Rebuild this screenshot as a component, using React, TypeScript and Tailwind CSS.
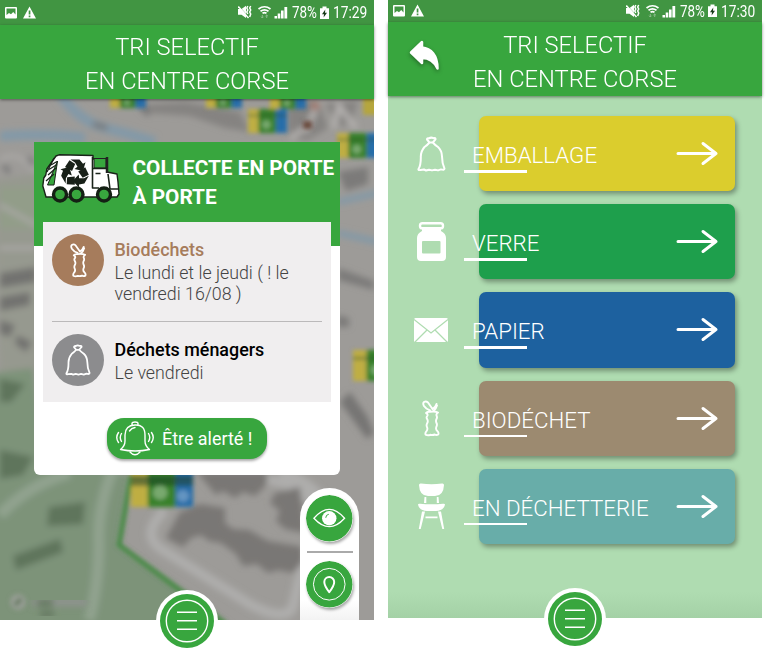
import React from "react";

const GREEN = "#38a63e";

type IconProps = { className?: string };

function StatusBar({ time, className }: { time: string; className: string }) {
  return (
    <div className={`flex shrink-0 items-center bg-[#419542] text-white ${className}`}>
      <svg className="h-[14px] w-[31px] shrink-0" viewBox="0 0 31 14" fill="#fff">
        <path fillRule="evenodd" d="M1 1h10a1 1 0 0 1 1 1v9.500a1 1 0 0 1-1 1H1a1 1 0 0 1-1-1V2a1 1 0 0 1 1-1zM1.500 2.500v6.500l2.500-2 2 1.300L8.200 6l2.300 2.500v-6z" />
        <path fillRule="evenodd" d="M24.500 .5 31 12.500H18zM23.700 4.500v4h1.700v-4zM23.700 9.600v1.600h1.700V9.600z" />
      </svg>
      <svg className="ml-auto h-[15px] w-[50px] shrink-0" viewBox="0 0 50 15" fill="#fff">
        <path d="M0 4h3.500L8 .8V13L3.500 9.700H0z" />
        <path d="M.5 .8 11 12.200" stroke="#419542" strokeWidth=".6" />
        <path d="M.3 1.500 10.500 13" stroke="#fff" strokeWidth="1.500" />
        <path d="M9.800 1l-1 2 1 2-1 2 1 2M12.700 1l-1 2 1 2-1 2 1 2-1 3" stroke="#fff" strokeWidth="1.500" fill="none" />
        <path d="M20.500 4q6-4.500 12 0M22.500 6.200q4-2.800 8 0M24.500 8.200q2-1.300 4 0" stroke="#fff" strokeWidth="1.700" fill="none" />
        <path d="M24.300 10v3m-1.300-1.300 1.300 1.300 1.200-1.300M28.700 13v-3m-1.300 1.200L28.700 10l1.200 1.200" stroke="#91c192" strokeWidth=".9" fill="none" />
        <path d="M36.500 11h2.500v2.500h-2.500zM39.700 8.500h2.600v5h-2.600zM43 5.500h2.600v8h-2.600zM46.400 2h2.800v11.500h-2.800z" />
      </svg>
      <span className="ml-[4px] mt-px w-[28px] shrink-0 origin-left scale-x-[0.84] whitespace-nowrap text-[16px] leading-none">78%</span>
      <svg className="h-[14px] w-[9px] shrink-0" viewBox="0 0 9 14">
        <path d="M2.500 .5h4v1.800H9V13H0V2.300h2.500z" fill="#fff" />
        <path d="M5.300 3.500 2 8.300h2L3.600 11.500 7 6.800H5z" fill="#173b18" />
      </svg>
      <span className="ml-[4px] mt-px w-[36px] shrink-0 origin-left scale-x-[0.86] whitespace-nowrap text-[16px] leading-none">{time}</span>
    </div>
  );
}

function Header({ back = false }: { back?: boolean }) {
  return (
    <header className={`relative z-10 flex h-[74px] shrink-0 items-start justify-center bg-[#38a63e] shadow-[0_1px_3px_rgba(0,0,0,0.45)] ${back ? "pt-[6px]" : "pt-[5px]"}`}>
      {back && (
        <svg className="absolute left-[21px] top-[17px] h-[32px] w-[31px] drop-shadow-[0_2px_2px_rgba(0,0,0,0.35)]" viewBox="0 0 31 32" fill="#fff" stroke="#fff" strokeWidth="2.500" strokeLinejoin="round">
          <path d="M2 13.500 13 3v5.500C22 9.500 28.500 16 28.500 29.500 25 22 20 19 13 19v5z" />
        </svg>
      )}
      <h1 className="whitespace-nowrap text-center text-[23.700px] font-light leading-[34px] text-white">
        TRI SELECTIF
        <br />
        EN CENTRE CORSE
      </h1>
    </header>
  );
}

function Bins({ x, y, w, h }: { x: number; y: number; w: number; h: number }) {
  return (
    <g>
      <rect x={x} y={y} width={w * 0.27} height={h} fill="#bfae42" />
      <rect x={x + w * 0.27} y={y} width={w * 0.45} height={h} fill="#38812a" />
      <rect x={x + w * 0.72} y={y} width={w * 0.28} height={h} fill="#286da9" />
      <rect x={x} y={y + h * 0.22} width={w} height={h * 0.1} fill="#234630" opacity=".4" />
      <circle cx={x + w * 0.47} cy={y + h * 0.65} r={h * 0.18} fill="#8eb785" opacity=".75" />
    </g>
  );
}

function MapBackdrop() {
  return (
    <svg className="absolute inset-0 h-full w-full" viewBox="0 99 374 521" preserveAspectRatio="none">
      <defs>
        <filter id="soft" x="-10%" y="-10%" width="120%" height="120%">
          <feGaussianBlur stdDeviation="3.2" />
        </filter>
        <filter id="slight" x="-10%" y="-10%" width="120%" height="120%">
          <feGaussianBlur stdDeviation="2" />
        </filter>
      </defs>
      <rect y="99" width="374" height="521" fill="#9d9b98" />
      <g filter="url(#soft)">
        <path d="M-5 180 60 170 110 350 0 380z" fill="#96998f" />
        <path d="M0 187h35v42H0z" fill="#929d89" />
        <path d="M60 94q20 28 45 34t50 14M0 136q50-3 85 2" stroke="#8299a8" strokeWidth="10" fill="none" />
        <path d="M338 202l40-9M338 233l40 9" stroke="#8299a8" strokeWidth="6" fill="none" />
        <path d="M0 160q18-12 34 12M0 205l36 20M0 248h36" stroke="#aaa8a6" strokeWidth="4" fill="none" />
        <path d="M-15 374 33 368 45 460 129 475 118 545 250 640H-15z" fill="#7d9379" />
        <path d="M0 515q28-30 70-42M115 465q-18 40-16 80-1 45-10 75" stroke="#91a38f" strokeWidth="11" fill="none" />
        <path d="M49 507l36-5-2 22-36 2zM13 556l47-17 3 13-47 18zM0 379l25 5-14 18H0zM0 450l33 7-10 18-23 4z" fill="#5f745c" />
        <path d="M0 273l36-6v15l-36 6zM0 297l30-5v13l-30 6zM0 320l15 5-5 12-10-3zM17 335l15 7-6 10-11-8z" fill="#727270" />
        <path d="M165 510q-28 27 1 42l85 53q40 20 43-3l13-55M280 472q20 4 40 24M240 478q70 0 74 36" stroke="#aeadac" strokeWidth="10" fill="none" />
        <path d="M197 472h70v12l-12 12-12-4-8 6-12-7-7 4zM275 493l25-6 5 46-20-4-9-8 4-10-10-8zM180 512l20-8 25 4v15l8 6 16 1 19 11 35 6v15l-10 11-15-3-10 3-11-9-14 2-7-12-15-11-12-2-8-6-10 3-8 9-17-9z" fill="#797775" />
        <path d="M340 402l10-10 17 24 7 17-7 6z" fill="#767573" />
        <path d="M338 268l36 13v9l-36-10zM338 172l30-5v17l-22 7zM337 315l12 3v9h-12z" fill="#7c7a79" />
        <path d="M140 105l45-3 55 10 10 20-25-4-35-12-40-3zM288 105l30-5 10 28-20 12-20-3zM325 104l33-3-6 20-12 6z" fill="#858381" />
        <path d="M318 102l-12 30M334 128l5-22 17 22M290 138l20-13" stroke="#b5b2b0" strokeWidth="5" fill="none" />
        <circle cx="315" cy="106" r="4" fill="#a57568" />
        <path d="M140 106l9 9M93 124l14 4M4 165l5 8M29 157l4 8M337 500l7 10" stroke="#777" strokeWidth="5" />
      </g>
      <g filter="url(#slight)">
        <path d="M131 475 119 545 225 624" stroke="#468a45" strokeWidth="5" fill="none" />
        <rect x="303" y="121" width="9" height="8" fill="#6b4c40" />
        <Bins x={110} y={91} w={36} h={17} />
        <Bins x={206} y={91} w={36} h={17} />
        <Bins x={270} y={91} w={36} h={18} />
        <Bins x={248} y={109} w={39} h={24} />
        <Bins x={337} y={133} w={42} h={25} />
        <rect x="363" y="90" width="16" height="25" fill="#b5a63c" />
        <Bins x={353} y={350} w={50} h={31} />
        <Bins x={131} y={466} w={62} h={41} />
        <rect x="131" y="477" width="62" height="9" fill="#173b25" opacity=".5" />
        <circle cx="183" cy="496" r="6" fill="#7da5cc" opacity=".7" />
        <circle cx="18" cy="602" r="8" fill="#959c93" />
        <path d="M15 605l6-6" stroke="#60775b" strokeWidth="3.500" />
      </g>
      <g filter="url(#soft)">
        <path d="M32 602h55" stroke="#8e938e" strokeWidth="9" />
        <path d="M37 603h16M40 614h14" stroke="#667962" strokeWidth="7" />
      </g>
    </svg>
  );
}

function TruckIcon() {
  return (
    <svg className="h-[50px] w-[78px] shrink-0" viewBox="0 0 78 50" strokeLinejoin="round">
      <path d="M14 2 17 .8 51 1.500V5h14v13l10 2 1 8 1 12-2 3h-6L4 43 2 36 .8 32l1-8 2-3 1-6z" fill="#fff" stroke="#192319" strokeWidth="1.400" />
      <path d="M52 4.500h12V14H52z" fill={GREEN} stroke="#222" />
      <path d="M65 3v16" stroke="#222" strokeWidth="2.500" fill="none" />
      <path d="M15.500 7 5.500 31H12z" fill={GREEN} stroke="#192319" />
      <path d="M5 18 12 4M6 21l8-7M7 15.500l8-5M9 11l6-3.500M4 27l8-7" stroke="#192319" strokeWidth="1.300" />
      <path d="M50.500 3v31H57M51 14.500h14M66 20l2 15h8M53.500 19.500h5" stroke="#192319" strokeWidth="1.600" fill="none" />
      {[0, 120, 240].map((angle) => (
        <g key={angle} transform={`rotate(${angle} 33 19)`} fill="#182018">
          <path d="M23 13 27.500 6.200 33.200 10 30 17z" />
          <path d="M28.500 5.600H37.500L41 9.800 43.500 8.300 41 17 32.500 15 35.500 12.800 33 8.500z" />
        </g>
      ))}
      {[18, 34.5, 62].map((cx) => (
        <circle key={cx} cx={cx} cy="40.500" r="6.500" fill={GREEN} stroke="#142014" strokeWidth="3.400" />
      ))}
    </svg>
  );
}

function BagIcon({ className = "" }: IconProps) {
  return (
    <svg className={className} viewBox="0 0 29 36" fill="none" stroke="#fff" strokeWidth="2" strokeLinejoin="round" strokeLinecap="round">
      <path d="M12.500 6.500 10 3.500q0-1.500 2-1.200Q14 1 16.500 2.200q2.300-.6 2 1.200l-2.700 3.100zM12.500 6.500q-2.400 2.800-5 4.500-3.500 4-3.700 9.500Q4 29 1.500 33q-.5 1.500 2 1l3.500-.5 2 1 3-.8 3 .7 3-.7 3 .7 3-1q3.500 1 3.500-.8Q25 27 25 20.500q-.2-6-4-9.500-3-2-5.200-4.500M12.500 6.500h3.300" />
    </svg>
  );
}

function AppleCoreIcon({ className = "" }: IconProps) {
  return (
    <svg className={className} viewBox="0 0 18 37" fill="none" stroke="#fff" strokeWidth="1.900" strokeLinejoin="round" strokeLinecap="round">
      <path d="M8 10.500Q4 9 2 6 .5 3.500 2 2q2-1.200 4 .5L10.500 9M10.500 9q3-1.500 4-5M11.500 11q2.500-2 3.500-5.500" />
      <path d="M4 13q1-1.500 4-1.200 4.500-1 8 .7-2 1.500-1.500 3 1 2 0 3.500-1 2 0 4t-.2 4q-.8 2.500 1 4 1.700 1.500 1 3.500-2 1-3.500 0-2 .8-4.500.3-2.500 1-4.800-.2-.5-2 1-3.500 1.500-2 .5-4t.3-4q1-2-.2-4t.4-3.500q.5-2-1.500-2.600z" />
    </svg>
  );
}

function JarIcon() {
  return (
    <svg className="h-[39px] w-[29px]" viewBox="0 0 29 39">
      <rect x="3" y="1.300" width="23" height="5" rx="2.400" fill="none" stroke="#fff" strokeWidth="2.400" />
      <path fillRule="evenodd" fill="#fff" d="M5 7h19v2q5 2.500 5 7v19q0 4-4 4H4q-4 0-4-4V16q0-4.500 5-7zM6 19q-1 0-1 1v10.500q0 1 1 1h16.500q1 0 1-1V20q0-1-1-1z" />
    </svg>
  );
}

function EnvelopeIcon() {
  return (
    <svg className="h-[24px] w-[34px]" viewBox="0 0 34 24">
      <rect width="34" height="24" rx="1.500" fill="#fff" />
      <path d="M0 1.500 17 15 34 1.500M1 24l12-12M33 24 21 12" stroke="#afdcb1" strokeWidth="1.300" fill="none" />
    </svg>
  );
}

function ChairIcon() {
  return (
    <svg className="h-[46px] w-[27px]" viewBox="0 0 27 46" fill="#fff">
      <path d="M1 2q0-1.800 2-1.500 10.500 1.500 21 0 2-.3 2 1.500-.5 11-9 11h-7Q1.500 13 1 2zM6.500 14h1.800v6H6zM18.800 14h1.700l.5 6h-2.200zM0 21.500q0-1 2-.8 11.500 1.300 23 0 2-.2 2 .8-1 6-9 6.500H9Q1 27.500 0 21.500zM4 28.500h3L2.700 46H.8zM20 28.500h3L26.200 46h-1.900zM7.500 33.600h12V35.200h-12z" />
    </svg>
  );
}

function BellIcon() {
  return (
    <svg className="h-[36px] w-[38px] shrink-0" viewBox="0 0 38 36" fill="none" stroke="#fff" strokeWidth="1.400" strokeLinecap="round" strokeLinejoin="round">
      <path d="M16 4V2.500q0-1.500 3-1.500t3 1.500V4M9 14q0-9.500 10-10t10 10v6q0 5 4.500 8.500-14 3-29 0Q9 25 9 20zM13.500 10q2-3 5.500-3.500M14 31q5 5.500 10 0" />
      <path d="M5.500 12.500q-2.500 4 0 8M2.500 11.500q-3.500 5 0 10M32.500 12.500q2.500 4 0 8M35.500 11.500q3.500 5 0 10" />
    </svg>
  );
}

function MenuButton() {
  return (
    <button className="absolute left-1/2 top-full mt-px flex h-[62px] w-[62px] -translate-x-1/2 -translate-y-1/2 items-center justify-center rounded-full bg-white">
      <svg className="h-[54px] w-[54px]" viewBox="0 0 54 54">
        <circle cx="27" cy="27" r="27" fill={GREEN} />
        <g fill="none" stroke="#fff" strokeWidth="1.400">
          <circle cx="27" cy="27" r="20.700" />
          <path d="M17 18.300h20M17 26.800h20M17 35.300h20" />
        </g>
      </svg>
    </button>
  );
}

function CollectionRow({ icon, color, title, titleColor, children }: { icon: React.ReactNode; color: string; title: string; titleColor: string; children: React.ReactNode }) {
  return (
    <div className="flex items-start">
      <div className={`flex h-[52px] w-[52px] shrink-0 items-center justify-center rounded-full ${color}`}>{icon}</div>
      <div className="ml-[10.500px] pt-[4px]">
        <h3 className={`whitespace-nowrap text-[17.900px] font-medium leading-[24px] ${titleColor}`}>{title}</h3>
        <p className="whitespace-nowrap text-[17.800px] font-light leading-[21px] text-[#444]">{children}</p>
      </div>
    </div>
  );
}

function MapPhone() {
  return (
    <section className="relative flex h-[620px] w-[374px] shrink-0 flex-col">
      <StatusBar time="17:29" className="h-[25px] pl-[5px] pr-[5px]" />
      <Header />
      <main className="relative flex-1">
        <MapBackdrop />
        <div className="absolute left-[34px] top-[43px] flex h-[333px] w-[306px] flex-col rounded-b-[6px] bg-[linear-gradient(#38a63e_104px,#fff_104px)]">
          <div className="flex h-[80px] shrink-0 pl-[8px] pt-[12px]">
            <TruckIcon />
            <h2 className="ml-[12.500px] whitespace-nowrap text-[20.800px] font-bold leading-[29px] text-white">
              COLLECTE EN PORTE
              <br />À PORTE
            </h2>
          </div>
          <div className="mx-[9px] flex h-[180px] shrink-0 flex-col bg-[#f0eeef] px-[9px] pt-[12px]">
            <CollectionRow icon={<AppleCoreIcon className="h-[35px] w-[17px]" />} color="bg-[#a67c5c]" title="Biodéchets" titleColor="text-[#a67c5c]">
              Le lundi et le jeudi ( ! le
              <br />
              vendredi 16/08 )
            </CollectionRow>
            <hr className="mb-[12px] mt-[17px] border-t-[1.5px] border-[#bbb9ba]" />
            <CollectionRow icon={<BagIcon className="h-[32px] w-[26px]" />} color="bg-[#8c8c8e]" title="Déchets ménagers" titleColor="text-black">
              Le vendredi
            </CollectionRow>
          </div>
          <button className="mx-auto mt-[16px] flex h-[41px] w-[160px] items-center rounded-[17px] bg-[#38a63e] pl-[9px] text-white shadow-[0_2px_3px_rgba(0,0,0,0.35)]">
            <BellIcon />
            <span className="ml-[8px] whitespace-nowrap pt-px text-[17.900px]">Être alerté !</span>
          </button>
        </div>
        <aside className="absolute bottom-0 left-[300px] flex h-[132px] w-[59px] flex-col items-center rounded-t-[30px] bg-[linear-gradient(#fff_85%,#f3f3f3)] pt-[7px]">
          <svg className="h-[46.500px] w-[46.500px] shrink-0 rounded-full shadow-[1px_2px_3px_rgba(0,0,0,0.35)]" viewBox="0 0 47 47">
            <circle cx="23.500" cy="23.500" r="23.500" fill={GREEN} />
            <path d="M8 23.500q15.500-18 31 0-15.500 17-31 0z" fill="none" stroke="#fff" strokeWidth="1.300" />
            <circle cx="23.500" cy="23.500" r="7.300" fill="#fff" />
            <path d="M20 23q0-3 3-3.500" fill="none" stroke={GREEN} />
          </svg>
          <div className="mb-[8px] mt-[9.500px] h-[2px] w-[46px] shrink-0 bg-[#aaa]" />
          <svg className="h-[46.500px] w-[46.500px] shrink-0 rounded-full shadow-[1px_2px_3px_rgba(0,0,0,0.35)]" viewBox="0 0 47 47">
            <circle cx="23.500" cy="23.500" r="23.500" fill={GREEN} />
            <circle cx="23.500" cy="23.500" r="16" fill="none" stroke="#fff" />
            <path d="M23.500 31.500q-5-6.500-5-10.300a5 5 0 0 1 10 0q0 3.800-5 10.300z" fill="none" stroke="#fff" strokeWidth="2" strokeLinejoin="round" />
          </svg>
        </aside>
      </main>
      <MenuButton />
    </section>
  );
}

const categories = [
  { label: "EMBALLAGE", color: "bg-[#dbcd2d]", icon: <BagIcon className="h-[36px] w-[29px]" /> },
  { label: "VERRE", color: "bg-[#1e9f4c]", icon: <JarIcon /> },
  { label: "PAPIER", color: "bg-[#1d619f]", icon: <EnvelopeIcon /> },
  { label: "BIODÉCHET", color: "bg-[#9c8a70]", icon: <AppleCoreIcon className="h-[37px] w-[18px]" /> },
  { label: "EN DÉCHETTERIE", color: "bg-[#68ada9]", icon: <ChairIcon /> },
];

function CategoryPhone() {
  return (
    <section className="relative ml-[14px] flex h-[618px] w-[374px] shrink-0 flex-col bg-[#afdcb1]">
      <StatusBar time="17:30" className="h-[22px] pl-[5px] pr-[5px]" />
      <Header back />
      <main className="flex flex-1 flex-col gap-[13px] bg-[linear-gradient(#afdcb1_95%,#a4d1a6)] pt-[20px]">
        {categories.map((item) => (
          <div key={item.label} className="flex h-[75.200px] shrink-0 pr-[27px]">
            <div className="flex w-[91px] items-center justify-center pr-[5px]">{item.icon}</div>
            <div className={`flex w-[256px] items-start rounded-[7px] shadow-[2px_3px_5px_rgba(0,0,0,0.35)] ${item.color}`}>
              <div className="-ml-[15px] mt-[23px]">
                <div className="whitespace-nowrap pl-[8px] text-[22.300px] font-light leading-[32px] text-white">{item.label}</div>
                <div className="-mt-px h-[2.500px] w-[63px] bg-white" />
              </div>
              <svg className="ml-auto mr-[16px] mt-[25px] h-[25px] w-[43px] shrink-0" viewBox="0 0 43 25" fill="none" stroke="#fff" strokeWidth="3" strokeLinecap="round" strokeLinejoin="round">
                <path d="M2 12.500h38M27 2.500 40 12.500 27 22.500" />
              </svg>
            </div>
          </div>
        ))}
      </main>
      <MenuButton />
    </section>
  );
}

export default function App() {
  return (
    <div className="flex h-[664px] w-[768px] items-start overflow-hidden bg-white font-['Roboto',sans-serif]">
      <MapPhone />
      <CategoryPhone />
    </div>
  );
}
